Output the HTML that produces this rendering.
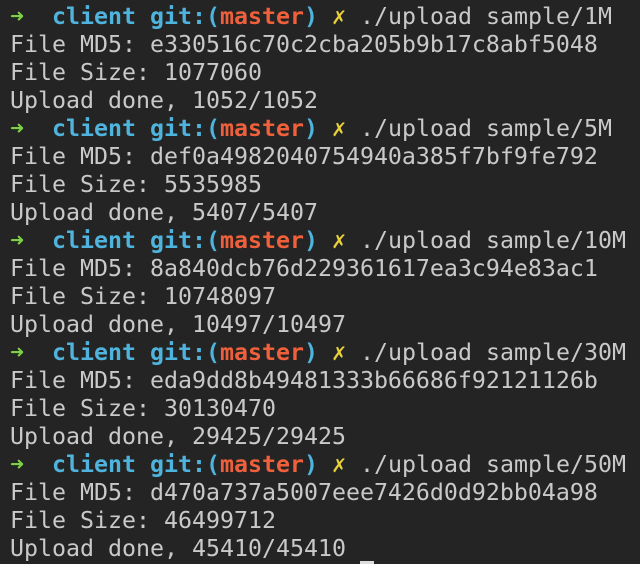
<!DOCTYPE html><html><head><style>
body{margin:0;background:#242424;width:640px;height:564px;overflow:hidden}
pre{margin:0;position:absolute;left:10px;top:3px;font-family:"DejaVu Sans Mono","Liberation Mono",monospace;font-size:23.25px;line-height:28px;color:#c9c9c9}
.g{color:#7ed145;font-weight:bold}.c{color:#4fb4dd;font-weight:bold}.r{color:#f0603a;font-weight:bold}.y{color:#e8d038}
.cur{position:absolute;left:360px;top:561px;width:14px;height:3px;background:#ddd}
</style></head><body><pre><span class="g">➜</span>  <span class="c">client</span> <span class="c">git:(</span><span class="r">master</span><span class="c">)</span> <span class="y">✗</span> ./upload sample/1M
File MD5: e330516c70c2cba205b9b17c8abf5048
File Size: 1077060
Upload done, 1052/1052
<span class="g">➜</span>  <span class="c">client</span> <span class="c">git:(</span><span class="r">master</span><span class="c">)</span> <span class="y">✗</span> ./upload sample/5M
File MD5: def0a4982040754940a385f7bf9fe792
File Size: 5535985
Upload done, 5407/5407
<span class="g">➜</span>  <span class="c">client</span> <span class="c">git:(</span><span class="r">master</span><span class="c">)</span> <span class="y">✗</span> ./upload sample/10M
File MD5: 8a840dcb76d229361617ea3c94e83ac1
File Size: 10748097
Upload done, 10497/10497
<span class="g">➜</span>  <span class="c">client</span> <span class="c">git:(</span><span class="r">master</span><span class="c">)</span> <span class="y">✗</span> ./upload sample/30M
File MD5: eda9dd8b49481333b66686f92121126b
File Size: 30130470
Upload done, 29425/29425
<span class="g">➜</span>  <span class="c">client</span> <span class="c">git:(</span><span class="r">master</span><span class="c">)</span> <span class="y">✗</span> ./upload sample/50M
File MD5: d470a737a5007eee7426d0d92bb04a98
File Size: 46499712
Upload done, 45410/45410</pre><div class="cur"></div></body></html>
